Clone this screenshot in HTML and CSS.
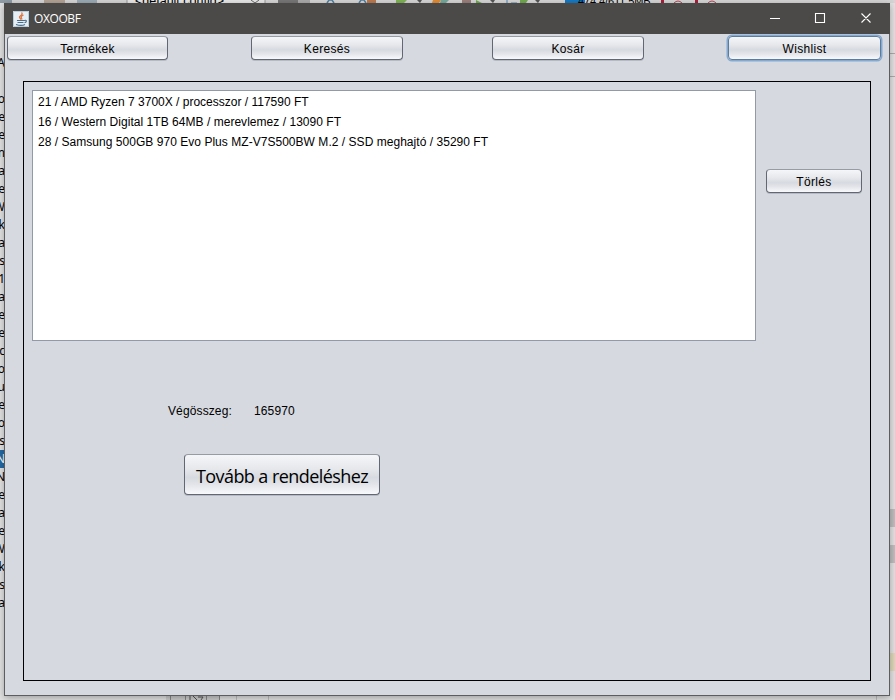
FILE: index.html
```html
<!DOCTYPE html>
<html lang="hu">
<head>
<meta charset="utf-8">
<title>OXOOBF</title>
<link rel="stylesheet" href="styles.css">
</head>
<body>
<div class="desktop">
  <svg class="toolbar" width="895" height="40" viewBox="0 0 895 40">
    <path d="M0 0H895V3H0z" fill="#d5d5d5"/>
    <path d="M0 0H12V11H5V3H0z" fill="#8f9ca5"/>
    <path d="M44 0h21v3H44z" fill="#b3a396"/><path d="M77 0h20v3H77z" fill="#9baab5"/>
    <path d="M127 0h138v3H127z" fill="#e7e7e7"/><path d="M127 0v3M265 0v3" stroke="#999"/>
    <path d="M251 0l4 3 4-3" fill="none" stroke="#666"/>
    <path d="M278 0h20v3h-20z" fill="#777"/><path d="M298 0h12v3h-12z" fill="#aaa"/>
    <path d="M327 3l2-3h3l2 3M359 3l2-3h3l2 3" fill="none" stroke="#5280a1" stroke-width="1.5"/>
    <path d="M367 0h9v3h-9z" fill="#ba7950"/>
    <path d="M396 0h11l-3 3h-8z" fill="#7eb255"/><path d="M417 0h5l-2 3zM490 0h5l-2 3zM535 0h5l-2 3z" fill="#555"/>
    <path d="M433 0h8l-2 3h-7z" fill="#e08b35"/><path d="M441 0h8l-3 3h-6z" fill="#74a89a"/>
    <path d="M462 0h9v3h-9z" fill="#997f7c"/><path d="M476 0l6 3h-6zM520 0h8l-2 3h-6z" fill="#71a94f"/>
    <path d="M507 0v3M511 3h6" stroke="#4e87b5"/>
    <path d="M565 0h20v3h-20z" fill="#1679c3"/>
    <path d="M661 0h3v3h-3zM695 0h3v3h-3z" fill="#a91f3c"/>
    <path d="M674 3q4-4 8 0M708 3q4-4 8 0" fill="none" stroke="#b04758"/>
  </svg>
  <div class="config">&lt;default config&gt;</div>
  <div class="memory">474,4/611,5MB</div>
  <div class="tree">
    <span>A</span><span></span><span>o</span><span>e</span><span>te</span><span>m</span><span>fa</span><span>te</span><span>W</span><span>tk</span><span>fa</span><span>s</span><span>1</span><span>ra</span><span>ne</span><span>ne</span><span>c</span><span>o</span><span>gu</span><span>te</span><span>to</span><span>is</span><span class="selected">N</span><span>N</span><span>te</span><span>fa</span><span>te</span><span>W</span><span>tk</span><span>s</span><span>ra</span>
  </div>
  <svg class="gutter" width="6" height="700" viewBox="0 0 6 700">
    <path d="M0 53.500H6M0 76.500H6" stroke="#aaa"/>
    <path d="M0 509H6V527H0zM0 545H6V563H0z" fill="#bebebe"/>
    <path d="M0 653H6V671H0z" fill="#dcd8ba"/>
  </svg>
  <svg class="bottom" width="895" height="4" viewBox="0 0 895 4">
    <path d="M166 0H219V4H166z" fill="#cbcbcb"/>
    <path d="M170.500 0V4M185.500 0V4M206.500 0V4M219.500 0V4" stroke="#888"/>
    <path d="M236.500 0V4M268.500 0V4M876.500 0V4" stroke="#bbb"/>
    <path d="M190 0v4M193 0l4 4M198 1h5l-2 3" fill="none" stroke="#555"/>
  </svg>
</div>

<main class="window">
  <header class="titlebar">
    <svg class="java" width="16" height="16" viewBox="0 0 16 16">
      <rect width="16" height="16" fill="#e5eef4"/><path d="M.5.5h15v15H.5z" fill="none" stroke="#b8cddb"/>
      <path d="M8.500 1.500C11 4 5.500 4.500 6.500 6.500L8 8.500M10.500 4C7.500 5.500 8 6 9 8.500" fill="none" stroke="#dc7945" stroke-width="1.300"/>
      <path d="M4 9.500h7.500M4.500 11.500h6M3 13.500c3 1 7 1 9 0M11.500 9.500c3-1 2 2 0 2.300" fill="none" stroke="#486e8d" stroke-width="1.100"/>
    </svg>
    <h1 class="title">OXOOBF</h1>
    <svg class="controls" width="103" height="12" viewBox="0 0 103 12">
      <path d="M0 5.500H10M45.500 .5H54.500V9.500H45.500zM91.500 .5L100.500 9.500M100.500 .5L91.500 9.500" fill="none" stroke="#fff" stroke-width="1.100"/>
    </svg>
  </header>
  <nav class="tabs">
    <button class="btn">Termékek</button>
    <button class="btn">Keresés</button>
    <button class="btn">Kosár</button>
    <button class="btn focused">Wishlist</button>
  </nav>
  <section class="panel">
    <div class="row">
      <ul class="list">
        <li>21 / AMD Ryzen 7 3700X / processzor / 117590 FT</li>
        <li class="wide">16 / Western Digital 1TB 64MB / merevlemez / 13090 FT</li>
        <li class="wide">28 / Samsung 500GB 970 Evo Plus MZ-V7S500BW M.2 / SSD meghajtó / 35290 FT</li>
      </ul>
      <button class="btn remove">Törlés</button>
    </div>
    <div class="total"><span class="label">Végösszeg:</span><span>165970</span></div>
    <button class="btn order">Tovább a rendeléshez</button>
  </section>
</main>
</body>
</html>
```

FILE: styles.css
```css
* { box-sizing: border-box; }
body {
  margin: 0;
  width: 895px;
  height: 700px;
  overflow: hidden;
  background: #e2e2e2;
  font: 12px/16px "Liberation Sans", Arial, sans-serif;
  color: #000;
}
.desktop { position: absolute; inset: 0; overflow: hidden; }
.toolbar { position: absolute; left: 0; top: 0; }
.config, .memory {
  position: absolute;
  top: -6px;
  height: 14px;
  line-height: 14px;
  white-space: nowrap;
}
.config { left: 135px; font-size: 12.5px; }
.memory { left: 578px; font-size: 11px; letter-spacing: -.1px; }
.tree {
  position: absolute;
  left: 0;
  top: 54px;
  width: 5px;
  font: 12px/18px "Noto Sans", sans-serif;
  overflow: hidden;
}
.tree span { display: flex; justify-content: flex-end; height: 18px; }
.tree .selected { background: #2469a5; color: #fff; }
.gutter { position: absolute; right: 0; top: 0; }
.bottom { position: absolute; left: 0; bottom: 0; }

.window {
  position: relative;
  width: 886px;
  height: 693px;
  margin: 3px 0 0 4px;
  border: 1px solid #5d5d5d;
  border-top: 0;
  background: #d6d9df;
  box-shadow: 0 2px 7px rgba(0, 0, 0, .3);
}
.titlebar {
  display: flex;
  align-items: center;
  height: 31px;
  margin: 0 -1px;
  padding: 0 17px 0 9px;
  background: #4c4a48;
}
.title {
  margin: 0 auto 0 5px;
  font: 12px/16px "Open Sans", sans-serif;
  letter-spacing: -.4px;
  color: #fff;
}
.tabs {
  display: grid;
  grid-template-columns: 161px 83px 152px 89px 152px 84px 153px;
  align-items: start;
  height: 47px;
  padding: 2px 0 0 2px;
}
.tabs .btn:nth-child(2) { grid-column: 3; }
.tabs .btn:nth-child(3) { grid-column: 5; }
.tabs .btn:nth-child(4) { grid-column: 7; }
.btn {
  display: block;
  height: 24px;
  margin: 0;
  padding: 0;
  border: 1px solid #626773;
  border-top-color: #979ba4;
  border-radius: 4px;
  background: linear-gradient(#f5f6f8 0%, #e6e8ec 35%, #d7dae0 58%, #e2e4e9 75%, #f7f9fb 100%);
  box-shadow: 0 1px 0 rgba(110, 115, 130, .3);
  font: 12px/16px "Liberation Sans", Arial, sans-serif;
  letter-spacing: .33px;
  color: #000;
}
.tabs .btn { padding-top: 1px; }
.tabs .focused { border-color: #5c7b9d; box-shadow: 0 0 0 1.500px #83abd2; }
.panel {
  width: 848px;
  height: 600px;
  margin-left: 18px;
  padding: 8px;
  border: 1px solid #000;
}
.row { display: flex; gap: 10px; }
.list {
  width: 724px;
  height: 251px;
  margin: 0;
  padding: 1px 5px;
  border: 1px solid #929aa8;
  background: #fff;
  list-style: none;
}
.list li { height: 20px; line-height: 20px; white-space: nowrap; }
.list .wide { letter-spacing: .035px; }
.remove { width: 96px; margin-top: 79px; padding-top: 1px; }
.total { display: flex; gap: 21px; margin: 62px 0 0 136px; height: 16px; letter-spacing: .12px; }
.label { width: 65px; }
.order {
  width: 196px;
  height: 41px;
  margin: 35px 0 0 152px;
  padding-top: 2px;
  font: 18px/24px "Open Sans", sans-serif;
  letter-spacing: -.57px;
}
```
